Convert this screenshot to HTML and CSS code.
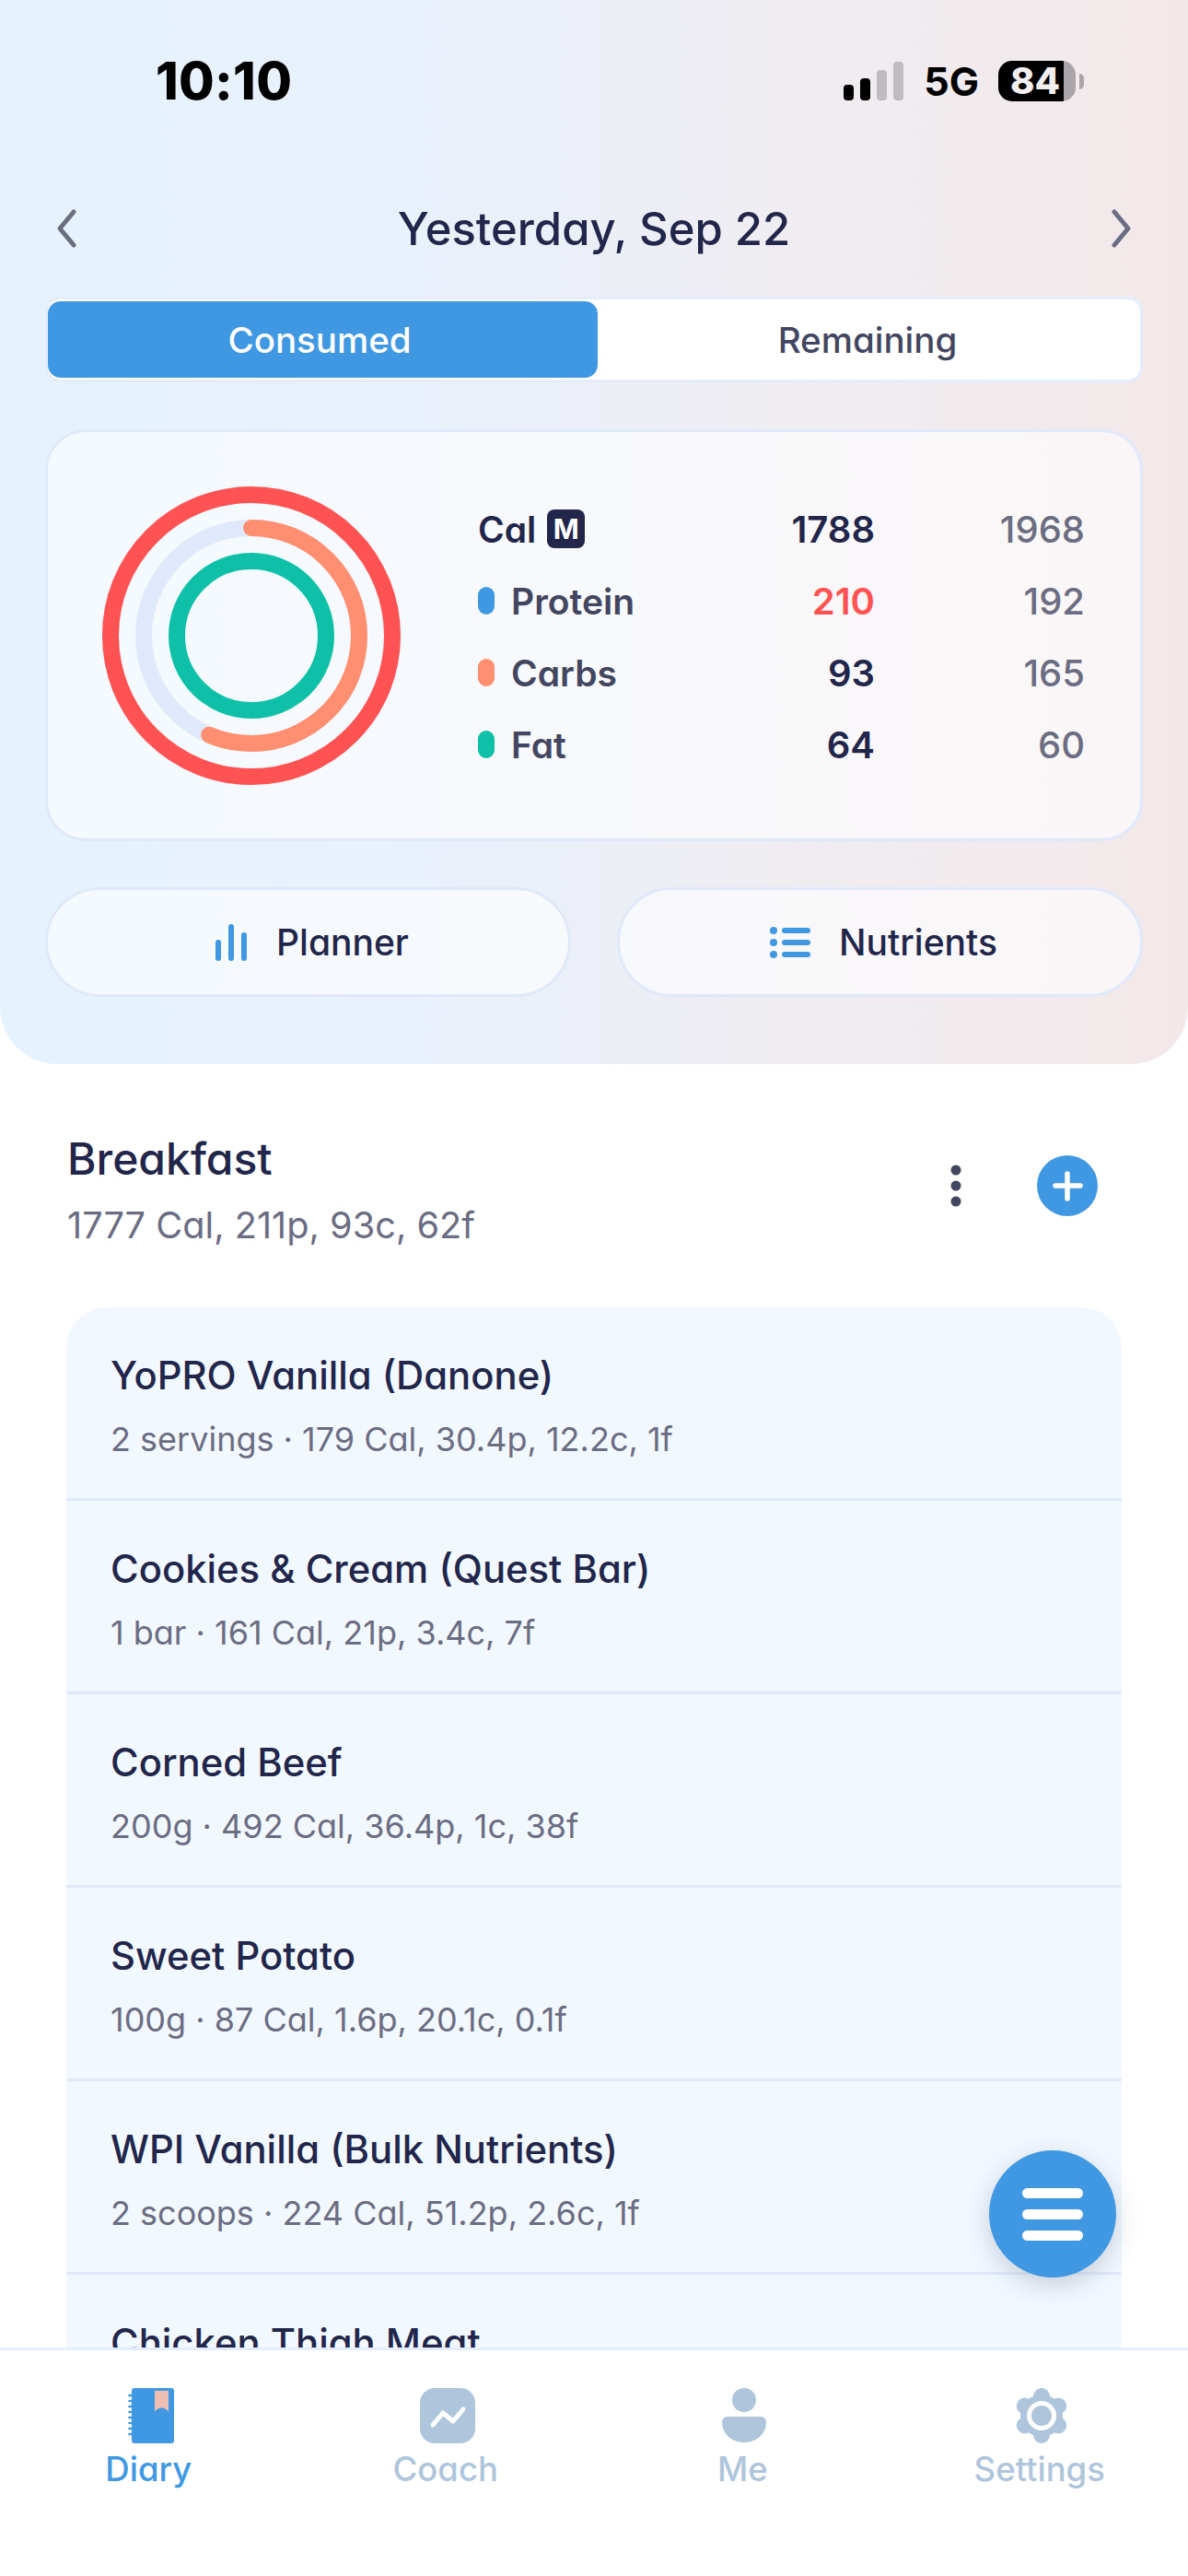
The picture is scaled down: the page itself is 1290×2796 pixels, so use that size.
FILE: index.html

```html
<!DOCTYPE html>
<html lang="en">
<head>
    <meta charset="UTF-8">
    <meta name="viewport" content="width=device-width, initial-scale=1.0">
    <title>Diary</title>
    <link rel="stylesheet" href="styles.css">
</head>
<body>
    <div class="app">
        <header class="top">
            <div class="status">
                <span class="clock">10:10</span>
                <div class="status-right">
                    <svg class="signal" width="66" height="42" viewBox="0 0 66 42">
                        <rect x="0" y="25" width="11" height="17" rx="4" fill="#000"/>
                        <rect x="18" y="18" width="11" height="24" rx="4" fill="#000"/>
                        <rect x="36" y="9" width="11" height="33" rx="4" fill="#bfbbbf"/>
                        <rect x="54" y="0" width="11" height="42" rx="4" fill="#bfbbbf"/>
                    </svg>
                    <span class="network">5G</span>
                    <span class="battery">84</span>
                </div>
            </div>

            <div class="date-row">
                <svg width="24" height="42" viewBox="0 0 24 42"><polyline points="20,3 5,21 20,39" class="chev"/></svg>
                <h1>Yesterday, Sep 22</h1>
                <svg width="24" height="42" viewBox="0 0 24 42"><polyline points="4,3 19,21 4,39" class="chev"/></svg>
            </div>

            <div class="segment">
                <div class="seg-item active">Consumed</div>
                <div class="seg-item">Remaining</div>
            </div>

            <section class="summary">
                <svg class="rings" width="324" height="324" viewBox="0 0 324 324">
                    <circle cx="162" cy="162" r="153" class="ring" stroke="#ff5252"/>
                    <circle cx="162" cy="162" r="117" class="ring" stroke="#dfe9fb"/>
                    <circle cx="162" cy="162" r="117" class="ring arc" stroke="#ff8f70" pathLength="100" stroke-dasharray="56.4 100" transform="rotate(-90 162 162)"/>
                    <circle cx="162" cy="162" r="81" class="ring" stroke="#0fc0a8"/>
                </svg>
                <div class="macros">
                    <div class="label cal">Cal <span class="badge">M</span></div>
                    <div class="val">1788</div>
                    <div class="goal">1968</div>

                    <div class="label"><i class="dot blue"></i>Protein</div>
                    <div class="val over">210</div>
                    <div class="goal">192</div>

                    <div class="label"><i class="dot orange"></i>Carbs</div>
                    <div class="val">93</div>
                    <div class="goal">165</div>

                    <div class="label"><i class="dot green"></i>Fat</div>
                    <div class="val">64</div>
                    <div class="goal">60</div>
                </div>
            </section>

            <div class="actions">
                <div class="pill">
                    <svg width="36" height="40" viewBox="0 0 36 40">
                        <line x1="4" y1="20" x2="4" y2="37" class="bar"/>
                        <line x1="18" y1="3" x2="18" y2="37" class="bar"/>
                        <line x1="32" y1="12" x2="32" y2="37" class="bar"/>
                    </svg>
                    Planner
                </div>
                <div class="pill">
                    <svg width="44" height="36" viewBox="0 0 44 36">
                        <circle cx="4" cy="5" r="4" fill="#4098e2"/>
                        <circle cx="4" cy="18" r="4" fill="#4098e2"/>
                        <circle cx="4" cy="31" r="4" fill="#4098e2"/>
                        <line x1="16" y1="5" x2="41" y2="5" class="bar"/>
                        <line x1="16" y1="18" x2="41" y2="18" class="bar"/>
                        <line x1="16" y1="31" x2="41" y2="31" class="bar"/>
                    </svg>
                    Nutrients
                </div>
            </div>
        </header>

        <div class="meal-head">
            <div>
                <h2>Breakfast</h2>
                <p>1777 Cal, 211p, 93c, 62f</p>
            </div>
            <div class="meal-tools">
                <svg width="12" height="46" viewBox="0 0 12 46">
                    <circle cx="6" cy="6" r="5.5" fill="#434660"/>
                    <circle cx="6" cy="23" r="5.5" fill="#434660"/>
                    <circle cx="6" cy="40" r="5.5" fill="#434660"/>
                </svg>
                <svg width="66" height="66" viewBox="0 0 66 66">
                    <circle cx="33" cy="33" r="33" fill="#4098e2"/>
                    <path d="M33 20V47M20 33H47" stroke="#fff" stroke-width="5.5" stroke-linecap="round"/>
                </svg>
            </div>
        </div>

        <div class="foods">
            <div class="food">
                <div class="food-name">YoPRO Vanilla (Danone)</div>
                <div class="food-info">2 servings · 179 Cal, 30.4p, 12.2c, 1f</div>
            </div>
            <div class="food">
                <div class="food-name">Cookies &amp; Cream (Quest Bar)</div>
                <div class="food-info">1 bar · 161 Cal, 21p, 3.4c, 7f</div>
            </div>
            <div class="food">
                <div class="food-name">Corned Beef</div>
                <div class="food-info">200g · 492 Cal, 36.4p, 1c, 38f</div>
            </div>
            <div class="food">
                <div class="food-name">Sweet Potato</div>
                <div class="food-info">100g · 87 Cal, 1.6p, 20.1c, 0.1f</div>
            </div>
            <div class="food">
                <div class="food-name">WPI Vanilla (Bulk Nutrients)</div>
                <div class="food-info">2 scoops · 224 Cal, 51.2p, 2.6c, 1f</div>
            </div>
            <div class="food">
                <div class="food-name">Chicken Thigh Meat</div>
            </div>
        </div>

        <nav class="tabs">
            <div class="tab current">
                <svg class="diary-icon" width="50" height="60" viewBox="0 0 50 60">
                    <rect x="4" y="0" width="46" height="60" rx="3" fill="#4098e2"/>
                    <path d="M1.5 8H5M1.5 14H5M1.5 20H5M1.5 26H5M1.5 32H5M1.5 38H5M1.5 44H5M1.5 50H5" stroke="#4098e2" stroke-width="2.5" stroke-linecap="round"/>
                    <path d="M29 3H44V26C41 20 32 20 29 26Z" fill="#f0bfb3"/>
                </svg>
                <span>Diary</span>
            </div>
            <div class="tab">
                <svg width="60" height="60" viewBox="0 0 60 60">
                    <rect width="60" height="60" rx="16" fill="#aec5dc"/>
                    <polyline points="14,40 25,27 36,36 47,23" fill="none" stroke="#fff" stroke-width="5" stroke-linecap="round" stroke-linejoin="round"/>
                </svg>
                <span>Coach</span>
            </div>
            <div class="tab">
                <svg width="48" height="60" viewBox="0 0 48 60">
                    <circle cx="24" cy="13" r="13" fill="#aec5dc"/>
                    <path d="M6 31H42a6 6 0 0 1 6 6C48 50 37 59 24 59C11 59 0 50 0 37a6 6 0 0 1 6-6Z" fill="#aec5dc"/>
                </svg>
                <span>Me</span>
            </div>
            <div class="tab">
                <svg width="60" height="60" viewBox="0 0 60 60">
                    <circle cx="30" cy="30" r="23" fill="#aec5dc"/>
                    <circle cx="30" cy="9" r="9" fill="#aec5dc"/>
                    <circle cx="48.2" cy="19.5" r="9" fill="#aec5dc"/>
                    <circle cx="48.2" cy="40.5" r="9" fill="#aec5dc"/>
                    <circle cx="30" cy="51" r="9" fill="#aec5dc"/>
                    <circle cx="11.8" cy="40.5" r="9" fill="#aec5dc"/>
                    <circle cx="11.8" cy="19.5" r="9" fill="#aec5dc"/>
                    <circle cx="30" cy="30" r="13.5" fill="none" stroke="#fff" stroke-width="5"/>
                </svg>
                <span>Settings</span>
            </div>
        </nav>

        <div class="fab">
            <i></i>
            <i></i>
            <i></i>
        </div>
    </div>
</body>
</html>
```

FILE: styles.css

```css
body, html {
    margin: 0;
    padding: 0;
    background-color: #ffffff;
    font-family: Inter, "Noto Sans", sans-serif;
    font-feature-settings: "cv11" 1;
}

.app {
    position: relative;
    width: 1290px;
    height: 2796px;
    display: flex;
    flex-direction: column;
    overflow: hidden;
}

/* top gradient panel */
.top {
    padding: 60px 49px 73px;
    background: linear-gradient(90deg, #e5f3ff 0%, #e9f1fc 35%, #efedf2 65%, #f3e8e9 100%);
    border-radius: 0 0 62px 62px;
}

.status {
    height: 56px;
    display: flex;
    align-items: center;
    justify-content: space-between;
    padding: 0 73px 0 120px;
}

.clock {
    font-size: 56px;
    font-weight: 800;
    color: #000000;
    letter-spacing: 0.3px;
    font-feature-settings: normal;
}

.status-right {
    display: flex;
    align-items: center;
    gap: 21px;
}

.network {
    font-size: 43px;
    font-weight: 700;
    color: #000000;
    font-feature-settings: normal;
}

.battery {
    position: relative;
    width: 84px;
    height: 44px;
    border-radius: 15px;
    background: linear-gradient(90deg, #000000 84%, #a9a5a8 84%);
    color: #f2eef0;
    font-size: 40px;
    font-weight: 800;
    line-height: 44px;
    text-indent: 13px;
    white-space: nowrap;
    font-feature-settings: normal;
}

.battery::after {
    content: "";
    position: absolute;
    right: -9px;
    top: 14px;
    width: 5px;
    height: 17px;
    border-radius: 0 5px 5px 0;
    background-color: #a9a5a8;
}

.date-row {
    margin-top: 102px;
    padding: 0 11px;
    height: 60px;
    display: flex;
    align-items: center;
    justify-content: space-between;
}

.chev {
    fill: none;
    stroke: #6b6d82;
    stroke-width: 5;
    stroke-linecap: round;
    stroke-linejoin: round;
}

.date-row h1 {
    margin: 0;
    font-size: 49px;
    font-weight: 500;
    color: #21264a;
}

.segment {
    margin-top: 44px;
    height: 93px;
    box-sizing: border-box;
    display: flex;
    background-color: #ffffff;
    border: 3px solid #e4edfb;
    border-radius: 16px;
}

.seg-item {
    flex: 1;
    display: flex;
    align-items: center;
    justify-content: center;
    padding-right: 3px;
    font-size: 38.5px;
    font-weight: 500;
    color: #434660;
}

.seg-item.active {
    flex: 0 0 597px;
    box-sizing: border-box;
    padding-right: 7px;
    margin: 2px 0;
    background-color: #4098e2;
    border-radius: 14px;
    color: #ffffff;
}

.summary {
    margin-top: 51px;
    height: 447px;
    box-sizing: border-box;
    display: flex;
    align-items: center;
    padding: 0 60px 0 59px;
    background-color: rgba(255, 255, 255, 0.6);
    border: 3px solid #e0e9fa;
    border-radius: 44px;
}

.ring {
    fill: none;
    stroke-width: 18;
}

.arc {
    stroke-linecap: round;
}

.macros {
    margin-left: auto;
    padding-top: 3px;
    width: 659px;
    display: grid;
    grid-template-columns: 1fr 130px 228px;
    grid-auto-rows: 78px;
    align-items: center;
    font-size: 40px;
}

.label {
    display: flex;
    align-items: center;
    font-size: 39px;
    font-weight: 600;
    color: #434660;
}

.label.cal {
    color: #21264a;
    gap: 12px;
}

.badge {
    width: 41px;
    height: 42px;
    display: flex;
    align-items: center;
    justify-content: center;
    background-color: #21264a;
    border-radius: 8px;
    color: #ffffff;
    font-size: 30px;
    font-weight: 700;
}

.dot {
    width: 18px;
    height: 30px;
    margin-right: 18px;
    border-radius: 9px;
}

.blue { background-color: #4098e2; }
.orange { background-color: #ff8f70; }
.green { background-color: #0fc0a8; }

.val {
    text-align: right;
    font-weight: 600;
    color: #21264a;
}

.val.over {
    color: #ff5252;
}

.goal {
    text-align: right;
    font-weight: 500;
    color: #6b6d82;
}

.actions {
    margin-top: 50px;
    display: flex;
    gap: 50px;
}

.pill {
    flex: 1;
    height: 119px;
    box-sizing: border-box;
    display: flex;
    align-items: center;
    justify-content: center;
    gap: 31px;
    padding-left: 8px;
    background-color: rgba(255, 255, 255, 0.6);
    border: 3px solid #e0e9fa;
    border-radius: 60px;
    font-size: 39px;
    font-weight: 500;
    color: #21264a;
}

.bar {
    stroke: #4098e2;
    stroke-width: 6;
    stroke-linecap: round;
}

/* meal header */
.meal-head {
    padding: 73px 98px 0 73px;
    display: flex;
    align-items: center;
    justify-content: space-between;
}

.meal-head h2 {
    margin: 0;
    font-size: 48px;
    line-height: 60px;
    font-weight: 500;
    color: #21264a;
}

.meal-head p {
    margin: 20px 0 0;
    font-size: 39.7px;
    line-height: 44px;
    color: #6b6d82;
}

.meal-tools {
    display: flex;
    align-items: center;
    gap: 82px;
    margin-top: -6px;
}

.foods {
    flex: 1;
    margin: 67px 72px 0 72px;
    min-height: 0;
    overflow: hidden;
    background-color: #f2f8ff;
    border-radius: 44px 44px 0 0;
}

.food {
    height: 210px;
    box-sizing: border-box;
    padding: 46px 48px 0;
    border-bottom: 3px solid #e1eafa;
}

.food-name {
    font-size: 41.8px;
    line-height: 56px;
    font-weight: 500;
    color: #21264a;
}

.food-info {
    margin-top: 21px;
    font-size: 36px;
    line-height: 40px;
    color: #6b6d82;
}

/* bottom tabs */
.tabs {
    height: 248px;
    box-sizing: border-box;
    flex: none;
    display: grid;
    grid-template-columns: repeat(4, 1fr);
    padding-top: 41px;
    background-color: #ffffff;
    border-top: 3px solid #e4edfb;
}

.tab {
    display: flex;
    flex-direction: column;
    align-items: center;
    font-size: 36.5px;
    line-height: 44px;
    font-weight: 500;
    color: #aec5dc;
}

.tab svg {
    margin-left: 4px;
}

.tab .diary-icon {
    margin-left: 6px;
}

.tab span {
    margin-top: 6px;
}

.tab.current {
    color: #4098e2;
}

.fab {
    position: absolute;
    left: 1074px;
    top: 2334px;
    width: 138px;
    height: 138px;
    display: flex;
    flex-direction: column;
    align-items: center;
    justify-content: center;
    gap: 12px;
    background-color: #4098e2;
    border-radius: 50%;
    box-shadow: 0 8px 28px rgba(40, 60, 90, 0.22);
}

.fab i {
    width: 66px;
    height: 11px;
    background-color: #ffffff;
    border-radius: 6px;
}
```
